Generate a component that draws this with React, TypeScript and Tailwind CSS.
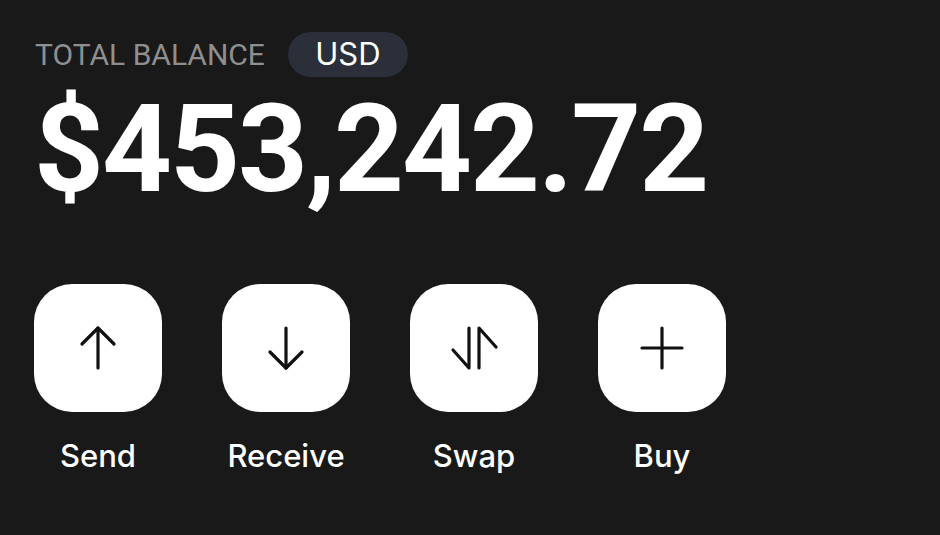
import React from 'react';

const ArrowUp = () => (
  <svg width="48" height="48" viewBox="0 0 48 48" fill="none" stroke="#111" strokeWidth="3.2" strokeLinecap="round" strokeLinejoin="round">
    <path d="M24 4v40" />
    <path d="M8 20 24 4l16 16" />
  </svg>
);

const ArrowDown = () => (
  <svg width="48" height="48" viewBox="0 0 48 48" fill="none" stroke="#111" strokeWidth="3.2" strokeLinecap="round" strokeLinejoin="round">
    <path d="M24 4v40" />
    <path d="M8 28 24 44l16-16" />
  </svg>
);

const SwapIcon = () => (
  <svg width="48" height="48" viewBox="0 0 48 48" fill="none" stroke="#111" strokeWidth="3.2" strokeLinecap="round" strokeLinejoin="round">
    <path d="M19 4v40L3 26" />
    <path d="M29 44V4l17 19" />
  </svg>
);

const PlusIcon = () => (
  <svg width="48" height="48" viewBox="0 0 48 48" fill="none" stroke="#111" strokeWidth="3.2" strokeLinecap="round">
    <path d="M24 4v40" />
    <path d="M4 24h40" />
  </svg>
);

const actions = [
  { label: 'Send', icon: <ArrowUp /> },
  { label: 'Receive', icon: <ArrowDown /> },
  { label: 'Swap', icon: <SwapIcon /> },
  { label: 'Buy', icon: <PlusIcon /> },
];

export default function App() {
  return (
    <div className="w-[940px] h-[535px] bg-[#191919] px-[34px] pt-[32px] overflow-hidden">
      <div className="flex items-center gap-[23px]">
        <span className="text-[30px] leading-none text-[#8f8f8f] font-['Roboto',sans-serif] ml-px">TOTAL BALANCE</span>
        <span className="h-[45px] w-[120px] rounded-full bg-[#2a2f3a] flex items-center justify-center text-white text-[31px] font-['Inter',sans-serif]">USD</span>
      </div>
      <div className="mt-[12px] text-white text-[122px] leading-none font-bold font-['Roboto',sans-serif] tracking-[-2px]">
        $453,242.72
      </div>
      <div className="mt-[73px] flex gap-[60px]">
        {actions.map((a) => (
          <div key={a.label} className="flex flex-col items-center w-[128px]">
            <button className="w-[128px] h-[128px] rounded-[38px] bg-white flex items-center justify-center">
              {a.icon}
            </button>
            <span className="mt-[28px] text-white text-[31px] leading-none font-medium font-['Inter',sans-serif]">{a.label}</span>
          </div>
        ))}
      </div>
    </div>
  );
}
